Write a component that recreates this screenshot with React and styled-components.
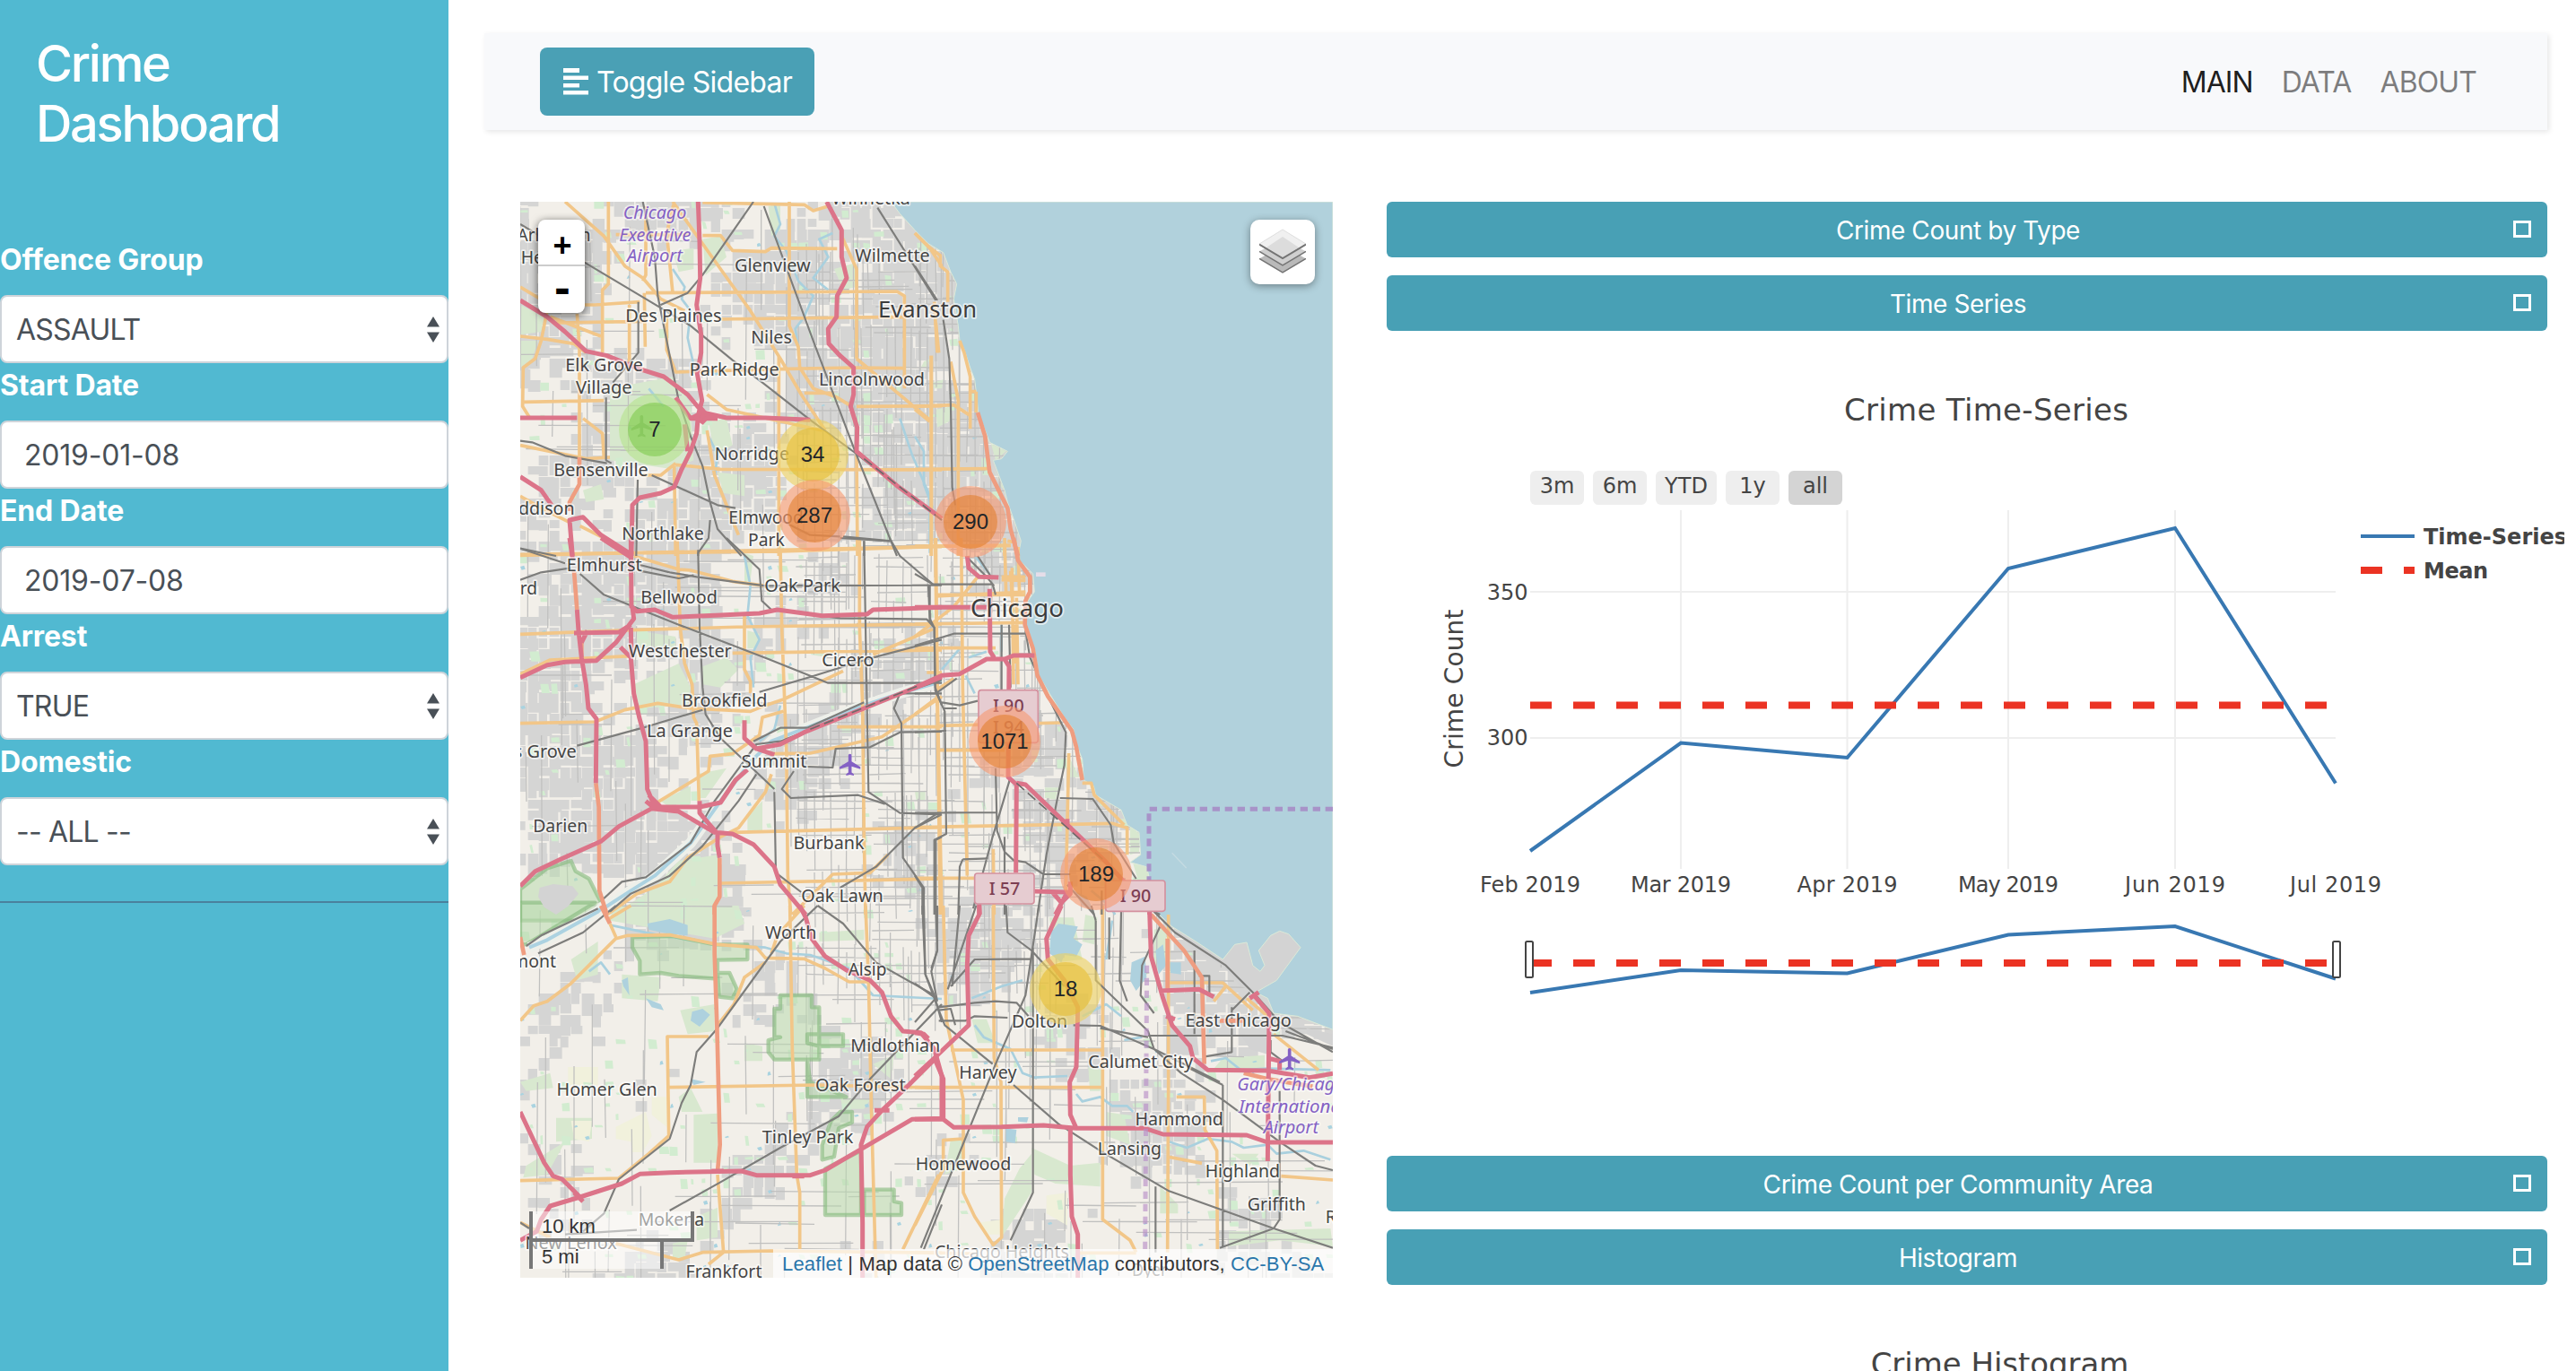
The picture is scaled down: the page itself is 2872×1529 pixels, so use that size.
import React from "react";
import styled, { createGlobalStyle } from "styled-components";

const UI_FONT = 'Inter, "Liberation Sans", sans-serif';
const MAP_UI_FONT = '"Liberation Sans", Arial, sans-serif';
const PLOT_FONT = '"DejaVu Sans", Verdana, sans-serif';

const GlobalStyle = createGlobalStyle`
  *, *::before, *::after { box-sizing: border-box; }
  body { margin: 0; background: #fff; font-family: ${UI_FONT}; color: #212529; overflow: hidden; }
`;

const Page = styled.div`
  display: flex;
  height: 1529px;
  overflow: hidden;
`;

/* ---------- Sidebar ---------- */

const Sidebar = styled.aside`
  flex: 0 0 500px;
  height: 100%;
  background: #51b9d1;
  color: #fff;
`;

const SidebarHeader = styled.header`
  height: 265px;
  padding: 38px 40px 0;
`;

const Title = styled.h3`
  margin: 0;
  width: 300px;
  font-size: 56px;
  font-weight: 500;
  line-height: 67px;
  letter-spacing: -2.3px;
`;

const Field = styled.div`
  display: flex;
  flex-direction: column;
`;

const FieldLabel = styled.label`
  height: 48px;
  margin-bottom: 16px;
  font-size: 32px;
  font-weight: 700;
  line-height: 49px;
  letter-spacing: -0.15px;
`;

const Control = styled.div`
  display: flex;
  align-items: center;
  justify-content: space-between;
  height: 76px;
  padding: 0 8px 0 ${(p) => (p.$inset ? "25px" : "16px")};
  border: 2px solid #ced4da;
  border-radius: 8px;
  background: #fff;
  color: #495057;
  font-size: 32px;
  letter-spacing: ${(p) => (p.$inset ? "-0.2px" : "-0.8px")};
`;

const Divider = styled.hr`
  margin: 40px 0 0;
  border: 0;
  border-top: 2px solid #4a819d;
`;

const SelectArrows = () => (
  <svg width="14" height="29" viewBox="0 0 14 29">
    <path d="M7 0L14 11.5H0ZM0 17.5H14L7 29Z" fill="#495057" />
  </svg>
);

/* ---------- Main area ---------- */

const Content = styled.main`
  flex: 1;
  padding: 37px 32px 0 40px;
`;

const Navbar = styled.nav`
  display: flex;
  align-items: center;
  justify-content: space-between;
  height: 108px;
  margin-bottom: 80px;
  padding: 0 79px 0 62px;
  background: #f8f9fb;
  box-shadow: 2px 2px 6px rgba(0, 0, 0, 0.1);
`;

const ToggleButton = styled.button`
  display: flex;
  align-items: center;
  gap: 9px;
  width: 306px;
  height: 76px;
  padding: 0 0 0 26px;
  border: 0;
  border-radius: 8px;
  background: #4aa0b5;
  color: #fff;
  font: 400 32px ${UI_FONT};
  letter-spacing: -0.75px;
  white-space: nowrap;
`;

const NavLinks = styled.div`
  display: flex;
  gap: 32px;
`;

const NavLink = styled.a`
  color: ${(p) => (p.$active ? "rgba(0,0,0,0.9)" : "rgba(0,0,0,0.5)")};
  padding-top: 2px;
  font-size: 32px;
  line-height: 48px;
  letter-spacing: -0.9px;
`;

const Columns = styled.div`
  display: flex;
  gap: 60px;
  padding-left: 40px;
`;

const Panels = styled.section`
  display: flex;
  flex-direction: column;
  width: 1294px;
`;

const PanelBar = styled.div`
  display: grid;
  grid-template-columns: 40px 1fr 40px;
  align-items: center;
  height: 62px;
  margin-bottom: ${(p) => (p.$open ? "0" : "20px")};
  border-radius: 6px;
  background: #48a0b5;
  color: #fff;
`;

const PanelName = styled.span`
  grid-column: 2;
  text-align: center;
  padding: 2px 20px 0 0;
  font-size: 28px;
  line-height: 40px;
  letter-spacing: -0.42px;
`;

const PanelToggle = styled.i`
  width: 20px;
  height: 19px;
  margin: 0 0 1px 2px;
  border: 3px solid #fff;
`;

const HistogramTitle = styled.h4`
  margin: 66px 0 0 73px;
  color: #444;
  text-align: center;
  font: 400 34px/44px ${PLOT_FONT};
  letter-spacing: -0.05px;
`;

/* ---------- Map ---------- */

const MapFrame = styled.section`
  position: relative;
  flex: 0 0 906px;
  height: 1200px;
  overflow: hidden;
  background: #f2efe9;
  font-family: ${MAP_UI_FONT};
`;

const MapSvg = styled.svg`
  display: block;
`;

const CLUSTER = {
  small: ["rgba(181,226,140,.6)", "rgba(120,200,70,.55)"],
  medium: ["rgba(236,209,95,.6)", "rgba(230,190,50,.6)"],
  large: ["rgba(246,152,112,.6)", "rgba(226,128,48,.6)"],
};

const Cluster = styled.div`
  position: absolute;
  left: ${(p) => p.$x - 40}px;
  top: ${(p) => p.$y - 40}px;
  width: 80px;
  height: 80px;
  padding: 10px;
  border-radius: 50%;
  background: ${(p) => CLUSTER[p.$size][0]};
`;

const ClusterCount = styled.div`
  height: 60px;
  border-radius: 50%;
  background: ${(p) => CLUSTER[p.$size][1]};
  color: #212529;
  text-align: center;
  font-size: 24px;
  line-height: 60px;
`;

const ZoomControl = styled.div`
  position: absolute;
  left: 20px;
  top: 20px;
  width: 52px;
  border-radius: 8px;
  background: #fff;
  box-shadow: 0 2px 10px rgba(0, 0, 0, 0.65);
  color: #000;
`;

const ZoomButton = styled.div`
  height: 52px;
  padding-left: 2px;
  text-align: center;
  font: 700 ${(p) => (p.$minus ? "44px/52px" : "36px/57px")} ${(p) => (p.$minus ? PLOT_FONT : MAP_UI_FONT)};
  border-bottom: ${(p) => (p.$minus ? "0" : "2px solid #ccc")};
`;

const LayersControl = styled.div`
  position: absolute;
  right: 20px;
  top: 20px;
  display: grid;
  place-items: center;
  width: 72px;
  height: 72px;
  border-radius: 10px;
  background: #fff;
  box-shadow: 0 2px 10px rgba(0, 0, 0, 0.4);
`;

const ScaleControl = styled.div`
  position: absolute;
  left: 10px;
  bottom: 10px;
`;

const ScaleLine = styled.div`
  width: ${(p) => p.$w}px;
  height: ${(p) => (p.$top ? 34 : 30)}px;
  padding-left: 10px;
  border: 4px solid #777;
  border-top: 0;
  ${(p) => (p.$top ? "" : "border-bottom: 0;")}
  background: rgba(255, 255, 255, 0.5);
  color: #333;
  font-size: 22px;
  line-height: ${(p) => (p.$top ? 34 : 33)}px;
`;

const Attribution = styled.div`
  position: absolute;
  right: 0;
  bottom: 0;
  width: 624px;
  height: 32px;
  padding-left: 10px;
  background: rgba(255, 255, 255, 0.7);
  color: #333;
  font-size: 22px;
  line-height: 33px;
  letter-spacing: 0.15px;
  white-space: nowrap;
  a { color: #2a76ab; }
`;

/* Six map tiles; every path inside a tile is local to that tile. */
const TILES = [
  {
    x: 0, y: 0,
    motorway: "M625,15L630,150L632,270L620,360L635,460L635,520L622,590L638,680L625,730L620,790L600,850L570,910L545,970L500,990L430,1005L405,1030L402,1200M30,345L120,400L180,450L250,515L320,530L430,575L510,600L590,660L640,720L720,738L850,738L1000,745M30,738L220,738M1055,15L1105,110L1105,200L1122,270L1090,330L1088,400L1060,440L1062,490L1100,530L1145,570L1145,660L1135,700L1157,770L1155,850L1290,965L1440,1075M30,935L100,980L135,1030M205,1200L195,1080L240,1070L300,1130L402,1195M550,670L600,740L640,720M600,740L690,740M590,850L580,760",
    trunk: "M228,870L228,960L195,1020L195,1050",
    road: "M180,15L310,130L380,230L440,270L500,340L580,380M325,15L325,290L305,310L305,520M30,300L130,360L280,360L430,350M120,380L100,480L80,540L40,570L38,700L60,735M40,685L310,680M220,390L228,500L228,870M30,465L120,475L210,490L250,520M150,420L440,415M130,400L300,465M395,360L395,570M445,320L448,500M450,320L1290,315L1315,330L1315,640M690,408L1310,400M540,15L700,240L800,380L900,540L970,660L1050,780M640,128L700,128L740,178L850,182L870,170L1090,172M930,15L930,430L960,500L965,570L1010,640L1090,670L1140,700M350,125L590,125M1060,30L1010,45L980,25L640,18M1105,130L1155,240L1155,540M450,30L450,260L440,280M520,400L520,510L550,585L890,575L1145,570L1310,572M895,530L895,1200M550,895L700,910L1440,912M30,830L250,875L330,870M240,740L305,790L310,870M545,900L550,1200M1155,850L1158,1200M655,660L720,710L1040,780M655,780L680,930L760,1130M440,1190L900,1185L1440,1168M1155,700L1440,698M1155,540L1400,745M1405,530L1405,1200M1420,420L1430,520M1350,120L1400,170L1440,230M980,655L1080,655M230,1100L310,1140L390,1190M30,1195L400,1190M30,1000L100,1040L200,1090M440,930L500,930L550,890M545,15L520,120L540,320",
    rail: "M30,90L240,215L450,340L600,430L740,545L840,620L1000,745L1150,855L1440,1080M810,15L640,260L590,320L500,360M845,30L900,180L1010,480L1150,850L1290,1200M1225,35L1420,345M440,15L480,200L490,330L510,430L560,680L600,800L640,900L665,1020L690,1110L770,1200M425,350L425,520L340,620M317,670L317,880L335,890M30,815L70,820L180,865L320,890M423,945L418,1200M470,930L690,1030L750,1040M665,1080L660,1140L625,1190L625,1200M1110,1135L1270,1150M1180,1150L1180,1200M900,1080L1000,1130L1100,1135M30,1175L150,1200",
    park: "M30,360L110,400L100,450L30,460ZM30,480L90,480L70,540L30,570ZM640,140L700,130L720,200L650,260ZM660,750L720,740L740,830L680,860ZM690,920L780,930L780,1000L710,990ZM330,640L540,600L600,690L610,880L540,910L330,880ZM540,180L610,170L610,240L560,250ZM240,980L300,960L310,1010L250,1020ZM860,30L900,20L900,110L870,130ZM1080,240L1150,220L1155,300L1110,310Z",
    stream: "M880,20L900,90L880,130L920,180L960,280L1010,330L980,400L950,440L960,500M1075,120L1030,140L1060,200L1010,270L1060,310M540,240L580,300L570,340L600,380L590,470L610,560M460,640L510,700M660,800L690,860L680,940M1300,740L1340,860L1400,1000L1400,1190",
  },
  {
    x: 1350, y: 0,
    trunk: "M210,720L235,800L250,920L290,1000L310,1040L320,1110L345,1200",
    road: "M0,120L45,165L85,195L85,230L110,250L110,350M65,350L75,520M55,530L55,1200M150,480L165,520L185,600L185,775M0,700L130,695L185,730M205,650L205,720M120,550L145,680L145,1200M185,650L205,650M0,910L245,908M0,1168L320,1165M0,710L50,750M300,1160L300,1200",
    rail: "M0,230L75,345M95,410L115,540L120,700L125,970L135,1030",
    park: "M70,710L120,700L115,750L75,770ZM255,825L305,850L270,880ZM30,550L50,540L40,570L20,570ZM60,620L95,610L90,640L65,640ZM260,900L300,980L290,970Z",
    stream: "M0,800L30,850L30,960L60,1040",
  },
  {
    x: 0, y: 1140,
    motorway: "M195,0L205,70M300,0L400,65M400,0L402,230L420,245L480,240L540,265L700,258L830,252L890,240L1040,260L1190,255L1210,240L1440,232M405,230L410,270L350,350L285,410L180,415L120,425L30,467M220,240L225,310L235,400L250,490L258,570L285,605L283,820M210,318L360,315L400,290M235,350L255,310M365,365L400,400L410,520L428,600L450,680L455,840L480,900L630,900L700,885L750,810L790,775M400,300L402,400M780,610L780,670L820,705L900,690L980,650L1180,570L1440,465M820,705L880,725M30,1165L80,1115L165,1075L300,1015L360,965L470,905L560,915L680,985L740,990L810,1025L880,1100L900,1160L985,1260M630,880L630,920L690,990L690,1030L697,1070M460,860L500,900M450,880L480,905",
    trunk: "M210,110L220,240M235,340L235,400M283,820L293,900L295,1180L320,1260M697,1070L697,1200L680,1230L680,1260",
    road: "M30,58L400,50L900,40L1440,28M555,0L565,300L580,420L605,490L610,600L620,620L628,880M410,60L560,105L600,108L740,145L850,160M900,40L905,300L920,700L925,1130L935,1260M30,322L400,308L780,297L1440,288M30,455L130,408L400,395M740,385L1440,375M780,260L780,440L800,480L800,520M1165,0L1165,300L1175,560L1180,1000L1185,1260M30,620L280,615L380,575L490,553L600,570L800,580L850,560L910,540L1110,445M1210,390L1410,305M1420,0L1425,540L1435,1260M480,890L660,780L665,730L740,722L830,660L840,600L910,580M870,722L1000,720L1240,665L1440,530M1090,632L1440,632M870,790L850,850L760,970L700,1000L590,1070L530,1150L420,1190L320,1260M740,985L1440,968M700,1155L1440,1140M940,1260L1020,1180L1075,1125L1200,1120L1260,1060M1390,450L1440,450",
    rail: "M30,35L180,85M30,140L100,115L200,100M230,120L310,190L560,290L860,405L1060,485L1440,485M430,90L530,115L620,130L850,160L1440,158M430,110L560,135L610,125M625,40L630,300L640,500L650,590L700,670L880,840M720,0L830,105L838,210L870,240L1100,268L1390,272L1415,300L1418,500L1440,560M1180,10L1195,850L1300,920L1440,925M1265,0L1300,60L1410,155M1400,160L1400,280M1100,0L1265,10M220,695L440,635L640,575M1440,340L1210,400L1000,465L830,515M1440,475L1300,520L1080,610L900,680L820,690L680,880L600,1020L450,1135L370,1150L300,1215M810,680L900,635L990,635L1180,550M820,790L760,880L640,1030L530,1130L400,1190L330,1250M1300,520L1280,570L1305,620L1310,1070L1380,1170L1380,1260M990,765L1075,768L1085,705L1200,700L1300,650L1440,648M945,780L905,840L935,870L1160,860L1250,890M880,850L885,1120L970,1185M1440,925L1350,970L1220,1100L1100,1170M1440,1000L1420,1010L1420,1260M1300,520L1440,520",
    park: "M410,490L560,420L600,500L590,560L430,570ZM640,430L720,400L760,440L700,500L640,490ZM560,1080L690,1060L690,1260L340,1260L480,1170ZM620,790L720,770L650,870L630,870ZM790,930L840,880L840,980L790,990ZM420,310L550,330L550,370L420,360ZM780,50L810,60L800,140L780,150ZM790,310L830,320L820,370L790,370ZM500,880L600,830L600,890L520,895ZM1000,390L1060,380L1060,400Z",
    forest: "M30,1175L120,1105L200,1080L215,1115L260,1140L290,1200L310,1235L240,1280L30,1280Z",
    canal: "M300,1245L400,1180L480,1130L600,1020L700,880L800,750L870,680L1000,630L1180,560L1300,520L1440,480",
    stream: "M780,60L800,160L790,260L830,340L800,400L810,500M900,560L880,640L830,680",
  },
  {
    x: 1350, y: 1140,
    motorway: "M0,500L90,460L150,455L240,405L300,405L315,430L312,800L340,825L338,1120M0,232L240,232M250,170L252,380L265,400M175,60L180,100L215,130L280,132M300,405L330,393L400,393M340,820L370,825L640,1085L700,1150M400,1182L510,1185L470,1260M215,1225L217,1260M785,1245L785,1260M510,940L510,965M460,1185L490,1220L520,1190L520,1150",
    trunk: "M330,0L345,75L385,130L385,180L370,210L368,290L395,370L410,460L445,530L525,645L540,700L560,810",
    road: "M0,28L320,25M68,0L75,500L90,1260M155,0L160,500L175,1130M70,190L370,190M70,195L370,180M290,130L370,130M290,140L370,142M0,288L370,283M0,368L270,368M325,100L330,490M340,200L345,490M335,290L340,420M300,0L305,190M345,30L350,190M320,110L325,200M0,330L130,230L210,130M80,628L490,618M80,710L300,710M0,968L520,958L660,955L710,970L710,1060M0,1138L240,1138M515,720L505,1180M560,820L590,820L600,860L700,960M262,1040L265,1260M0,590L80,530M70,510L130,470M310,10L340,15M625,1240L625,1260",
    rail: "M0,120L60,155L260,155L270,190M45,160L50,270L65,300L68,510L100,580L105,990L65,1010L65,1260M0,360L130,320L370,320M0,520L70,520L140,470M90,550L150,560L210,545M95,570L140,570M0,650L105,645M290,290L290,510M315,290L320,500M370,310L385,400L440,520L505,650L500,760L475,880L440,1060L410,1260M485,870L595,873L655,960L665,1020L740,1140M270,770L275,980L300,1050L330,1078L370,1085L430,1125L520,1125M510,1160L600,1260M320,800L260,1000L195,1240M0,920L275,918M160,1075L150,1100L145,1260M160,1075L245,1072M300,1000L300,1260M0,1130L25,1170L25,1260M180,70L240,130L265,160M210,60L255,130M625,1180L625,1260M800,1250L820,1260M0,970L70,925M370,825L510,965",
    park: "M520,740L550,800L520,800ZM670,940L700,940L750,990L750,1050L720,1060L720,970ZM730,1090L780,1100L780,1150L745,1140ZM405,310L420,310L415,360L405,360ZM435,835L480,835L470,875L435,870ZM390,710L415,710L410,750L390,750ZM0,850L35,845L35,875L5,880Z",
    stream: "M150,370L90,440M170,460L200,520M200,60L250,120M240,380L180,400M290,290L290,380M590,1180L650,1230L670,1260",
    lake: "M530,1180L575,1200L600,1250L560,1230Z",
  },
  {
    x: 0, y: 2370,
    motorway: "M965,0L985,40L1005,110L1050,170L1120,215L1200,250L1240,290L1270,370L1310,420L1370,425L1415,480L1440,570L1440,710M1415,515L1330,600L1240,685L1190,740L1170,800L1175,1060L1175,1245M30,690L110,860L140,905L170,915L230,975M230,975L130,1005L100,1050L85,1090L30,1120M230,975L370,930L430,898L530,893L770,888L820,902L1000,902L1050,885L1170,815L1340,715L1440,712M210,960L240,990M670,888L710,888M940,905L980,905M1215,685L1265,685",
    trunk: "M300,0L330,60M680,0L680,160L688,400L698,800L690,890M30,105L43,165",
    road: "M30,385L75,335L120,320L200,260L350,110L390,100L530,98L690,130L820,140L850,175L980,178L1050,210L1130,255L1200,255M330,60L350,105M1185,0L1195,250L1205,700L1220,1245M932,0L940,480L955,900L965,960L965,1150M850,190L780,240L745,330L690,400M870,160L890,100L980,0M660,438L522,438L527,770L460,830L360,912L30,920M522,608L1020,600L1440,610M690,900L710,1160L660,1200M350,1130L560,1185L640,1160L870,1155L1440,1162M1430,900L1310,1150M325,45L400,0M30,1060L130,1110",
    rail: "M50,135L100,100L290,10M90,160L240,90L350,0M1025,0L900,120L690,410L620,490L600,600L570,660L530,780L360,915L310,1030L240,1090M1025,0L1110,60L1220,190L1415,300L1440,390M1440,330L1200,580L1095,705L900,810L700,925L530,1020M1380,0L1385,230L1415,300M1420,0L1425,150L1405,210M1440,1000L1380,1150M30,1060L60,1080M180,1100L420,1085",
    park: "M340,0L760,0L780,60L680,110L330,50ZM200,180L290,120L290,230L220,250ZM370,230L500,240L490,320L370,310ZM565,350L680,330L680,420L590,430ZM610,700L690,695L690,860L610,860ZM50,870L180,790L120,900L40,910ZM150,710L270,710L270,780L150,790ZM780,460L840,470L840,520L780,520ZM1210,530L1280,500L1270,580ZM30,590L130,560L140,610L50,620ZM560,640L600,610L640,690L570,690ZM620,1040L690,1010L690,1110L620,1120ZM1030,90L1180,80L1180,115L1030,120ZM540,1130L590,1120L580,1180L540,1180ZM1100,640L1200,650L1180,680L1110,680Z",
    field: "M190,540L290,540L290,600L190,600ZM470,640L525,640L520,740L470,700ZM350,740L450,690L470,770L440,825L405,825L400,790L350,780ZM200,720L270,720L260,790L210,780Z",
    forest: "M30,-10L280,-10L100,100L50,130L30,130ZM405,105L540,102L680,130L790,130L790,180L690,182L690,245L560,235L500,225L430,230L430,185L405,140ZM690,225L730,225L755,280L740,310L695,305ZM900,300L1005,300L1005,340L1030,340L1030,515L880,515L860,490L860,450L900,440L880,440L880,345L900,345ZM990,430L1110,430L1110,470L1030,470L990,460ZM990,515L1000,590L1050,610L1120,640L990,640ZM1040,850L1040,800L1070,720L1100,690L1140,690L1140,725L1095,745L1080,840ZM1050,880L1170,820L1170,1035L1050,1035ZM1180,950L1280,950L1280,990L1305,995L1305,1035L1180,1035Z",
    lake: "M455,60L530,45L590,65L590,100L530,95L460,80ZM605,355L640,345L665,365L630,405L600,385ZM450,310L500,330L510,350L470,340ZM370,250L390,240L395,300L375,270ZM600,580L650,590L610,600Z",
    canal: "M60,140L120,115L290,20L310,0",
    stream: "M330,65L500,100L690,130L850,140L920,160L1000,165L1130,210L1210,300L1440,312M260,220L300,190L330,230",
  },
  {
    x: 1350, y: 2370,
    motorway: "M785,20L790,170L830,310L860,400L920,470L930,510L980,550L1180,552L1320,575L1398,562M820,285L950,280L1000,305M1130,295L1185,360L1180,855M490,0L440,110L445,180L500,250L545,340L540,540L518,590L520,700L540,745L770,745L830,765L1110,768L1180,792L1398,792M540,745L430,735L290,740L130,742L95,715L0,715M95,715L95,580L65,510L0,570M65,510L180,400L175,200L180,100L215,30L215,0M0,425L30,430L45,445M520,745L520,900L525,1040L545,1100L545,1245M840,370L870,380M1120,310L1150,290M1180,510L1220,520L1220,550",
    trunk: "M790,30L900,150L960,240L968,530M845,110L845,280M1100,560L1180,580L1330,605M1020,385L1100,385",
    road: "M95,0L105,380L130,500L162,650L162,960L200,1040L262,1135L290,1110L288,590L265,510L262,0M0,608L630,608M120,483L630,483M628,0L628,1050L720,1120L740,1160M848,30L848,600L845,1160M850,258L1030,258L1130,350M875,640L968,640L970,750L1010,820L1012,1150M845,840L960,862M1225,905L1398,918M1200,430L1350,550M1110,310L1180,370M160,780L95,785L95,880L0,1070M1000,320L1040,270M540,1162L740,1162M0,1160L200,1165",
    rail: "M25,0L35,230L80,350L100,400L260,530M75,0L75,150L55,220L75,320M150,0L125,270M205,0L110,280M415,0L370,300L270,530L20,1145M395,140L395,960L320,1120M305,0L310,90L390,150L500,270M330,600L480,730L620,820L850,955L1200,1080L1398,1145M605,50L605,250L780,420L800,480L890,560L1030,650L1220,790L1340,870L1398,885M800,20L870,90L1040,200L1140,300L1220,390L1398,490M780,435L1230,435L1398,475M1240,420L1398,480M530,400L620,402L800,480L1020,590M620,410L780,440M1030,600L1030,1140M1220,620L1220,1050L1200,1080L1020,1145M1060,340L1060,490L970,505M1120,290L1060,350M80,340L200,325L270,320L340,325L380,370M0,260L70,310L0,390M80,385L170,385L200,370L310,375M80,350L120,345L135,400M805,940L805,1160M690,20L685,250L710,320M985,300L985,235L950,235M935,150L935,430M820,70L760,200L755,300L800,360M120,270L200,180L390,178M1190,450L1190,490L1230,520M910,540L1030,600M650,40L650,180M590,0L605,50",
    park: "M390,810L520,870L620,860L620,940L470,930L400,900ZM350,880L390,830L390,960L330,1050L290,1110L300,980ZM800,80L840,70L840,200L800,220ZM640,690L700,700L720,800L640,770ZM570,30L610,40L600,130L560,120ZM820,940L880,1000L880,1030L820,1030ZM1050,1090L1390,1080L1398,1140L1220,1120L1050,1140ZM190,380L240,380L270,460L210,460ZM1030,510L1170,500L1170,545L1000,545ZM450,40L530,40L560,180L470,190ZM120,780L160,780L160,880L100,900ZM580,540L630,550L620,620L585,620ZM1060,830L1150,830L1120,870Z",
    field: "M440,970L510,960L510,1070L440,1030ZM220,1060L290,1050L290,1100L230,1100Z",
    lake: "M455,90L480,60L545,70L530,110L560,130L540,170L500,165L490,190L450,160ZM725,190L770,170L775,240L740,285L720,250ZM805,150L830,130L840,200L815,230ZM305,745L340,750L335,795L305,790ZM850,190L890,190L890,230L855,225ZM345,708L380,708L375,725L345,722Z",
    stream: "M200,400L230,440L320,480L360,560L400,575L510,570M190,310L240,290L290,270L360,250M540,630L560,655L620,640L660,670L710,670L730,690M560,370L640,330L690,370M660,50L640,180M850,790L910,810L980,780L1060,790L1100,810L1180,800L1210,830L1300,820L1390,850M990,520L1040,510L1090,550L1180,545L1390,550M700,450L760,440",
  },
];

const WATER =
  "M1270,15L1300,55L1350,110L1395,155L1445,185L1470,250L1490,290L1480,340L1495,430L1500,480L1515,510L1535,570L1550,610L1555,650L1562,720L1585,780L1600,820L1660,850L1640,875L1612,880L1650,980L1660,1020L1685,1090L1705,1150L1695,1200L1700,1215L1745,1260L1750,1320L1725,1355L1720,1430L1750,1510L1765,1600L1800,1660L1850,1740L1880,1780L1890,1830L1910,1880L1915,1950L1948,1970L1955,2000L2040,2050L2060,2100L2100,2125L2105,2200L2070,2225L2125,2240L2135,2280L2145,2380L2210,2440L2290,2490L2380,2550L2420,2500L2460,2493L2475,2550L2480,2570L2505,2590L2520,2570L2500,2520L2540,2470L2570,2455L2600,2465L2640,2510L2560,2620L2490,2660L2530,2680L2550,2730L2630,2740L2748,2785L2748,15Z";
const INDUSTRIAL =
  "M2230,2450L2290,2490L2380,2550L2420,2500L2460,2493L2475,2550L2480,2570L2505,2590L2520,2570L2500,2520L2540,2470L2570,2455L2600,2465L2640,2510L2560,2620L2490,2660L2440,2640L2380,2570L2280,2520ZM2660,2780L2748,2800L2748,2840L2660,2800ZM2190,2780L2290,2770L2300,2870L2190,2870ZM2440,2800L2530,2810L2540,2870L2470,2850Z";

/* Repeatable pseudo-random source for the urban texture. */
const makeRandom = (seed) => {
  let s = seed;
  return () => {
    s = (s * 1664525 + 1013904223) % 4294967296;
    return s / 4294967296;
  };
};

const buildTexture = () => {
  const rnd = makeRandom(71);
  const phase = Array.from({ length: 8 }, () => rnd() * 6.28);
  const noise = (x, y) =>
    Math.sin(x / 170 + phase[0]) * Math.cos(y / 210 + phase[1]) +
    0.7 * Math.sin((x + y) / 95 + phase[2]) +
    0.6 * Math.cos((x - y) / 120 + phase[3]);
  let blocks = "";
  let greens = "";
  let ponds = "";
  let streets = "";
  const c = 36;
  for (let y = 0; y < 3640; y += c) {
    for (let x = 20; x < 2760; x += c) {
      const city = x > 900 && y > 1150 && y < 2400;
      const north = y < 1150;
      const west = x < 700 && y < 2250;
      const south = y > 2500;
      let bias = 0;
      if (city) bias = -0.35;
      if (north) bias = x > 1150 ? 1.6 : 0.5;
      if (west && !north) bias = 1.4;
      if (south) bias = -0.45;
      if (x > 1650 && y > 1700 && y < 2150) bias = 0.8;
      if (x > 2150 && y > 2400 && y < 2800) bias = 1.6;
      if (noise(x, y) + bias + (rnd() - 0.5) * 1.6 > 0.35) {
        const w = c * (0.75 + rnd() * 0.5);
        const h = c * (0.75 + rnd() * 0.5);
        blocks += `M${x},${y}h${w.toFixed(0)}v${h.toFixed(0)}h-${w.toFixed(0)}z`;
      }
      const g = rnd();
      if (g < 0.085) {
        const w = 8 + rnd() * 26;
        const h = 8 + rnd() * 26;
        greens += `M${x + 5},${y + 8}l${w.toFixed(0)},${(rnd() * 6 - 3).toFixed(0)}l${(rnd() * 6).toFixed(0)},${h.toFixed(0)}h-${w.toFixed(0)}z`;
      } else if (g > 0.98) {
        ponds += `M${x + 10},${y + 12}l${(4 + rnd() * 10).toFixed(0)},-4l4,${(4 + rnd() * 9).toFixed(0)}l-12,3z`;
      }
    }
  }
  const addRun = (x, y, vertical, len) => {
    const wob = (rnd() * 8 - 4).toFixed(0);
    streets += vertical ? `M${x.toFixed(0)},${y.toFixed(0)}l${wob},${len.toFixed(0)}` : `M${x.toFixed(0)},${y.toFixed(0)}l${len.toFixed(0)},${wob}`;
  };
  for (let i = 0; i < 400; i++) addRun(20 + rnd() * 2700, rnd() * 3600, rnd() < 0.5, 120 + rnd() * 420);
  for (let x = 960; x < 2060; x += 27) {
    for (let y = 150; y < 2700; y += 260) if (rnd() < 0.62) addRun(x, y + rnd() * 40, true, 120 + rnd() * 240);
  }
  for (let y = 250; y < 2650; y += 29) {
    for (let x = 950; x < 2050; x += 240) if (rnd() < 0.6) addRun(x + rnd() * 40, y, false, 100 + rnd() * 230);
  }
  return { blocks, greens, ponds, streets };
};

const TEXTURE = buildTexture();

/* [text, tile, centre x, baseline y, width] */
const LABELS = [
  ["Winnetka", 0, 1203, 25, 262], ["Arlington", 0, 143, 148, 245], ["Heights", 0, 138, 223, 212],
  ["Glenview", 0, 874, 250, 254], ["Wilmette", 0, 1275, 215, 250], ["Des Plaines", 0, 543, 417, 322],
  ["Niles", 0, 870, 490, 137], ["Elk Grove", 0, 311, 583, 260], ["Village", 0, 310, 657, 188],
  ["Park Ridge", 0, 746, 597, 300], ["Lincolnwood", 0, 1206, 630, 354], ["Norridge", 0, 805, 879, 250],
  ["Bensenville", 0, 300, 932, 316], ["Addison", 0, 99, 1063, 226], ["Elmwood", 0, 852, 1092, 250],
  ["Park", 0, 853, 1166, 122], ["Northlake", 0, 507, 1147, 275],
  ["Elmhurst", 2, 311, 110, 252], ["Lombard", 2, -35, 190, 244], ["Oak Park", 2, 974, 180, 254],
  ["Bellwood", 2, 561, 218, 257], ["Westchester", 2, 565, 398, 345], ["Cicero", 2, 1126, 430, 175],
  ["Brookfield", 2, 713, 564, 286], ["La Grange", 2, 597, 665, 288], ["Downers Grove", 2, 3, 736, 430],
  ["Summit", 2, 879, 768, 218], ["Darien", 2, 164, 984, 183], ["Burbank", 2, 1062, 1042, 237],
  ["Oak Lawn", 2, 1107, 1218, 275],
  ["Worth", 4, 935, 110, 172], ["Lemont", 4, 45, 206, 210], ["Alsip", 4, 1191, 235, 128],
  ["Midlothian", 4, 1285, 489, 300], ["Homer Glen", 4, 320, 636, 337], ["Oak Forest", 4, 1168, 622, 302],
  ["Tinley Park", 4, 992, 794, 305], ["Mokena", 4, 535, 1070, 220], ["New Lenox", 4, 200, 1150, 307],
  ["Frankfort", 4, 711, 1245, 255],
  ["Homewood", 5, 162, 886, 320], ["Dolton", 5, 417, 408, 186], ["East Chicago", 5, 1082, 404, 355],
  ["Harvey", 5, 244, 579, 193], ["Calumet City", 5, 755, 542, 350], ["Hammond", 5, 884, 736, 295],
  ["Lansing", 5, 718, 835, 213], ["Highland", 5, 1096, 908, 250], ["Griffith", 5, 1210, 1020, 195],
  ["R", 5, 1391, 1062, 36], ["Chicago Heights", 5, 291, 1180, 450], ["Dyer", 5, 785, 1240, 118],
];
const CITY_LABELS = [["Evanston", 0, 1392, 403, 330, 75], ["Chicago", 3, 342, 264, 312, 84]];
const AIRPORT_LABELS = [
  ["Chicago", 0, 480, 73, 212], ["Executive", 0, 481, 148, 240], ["Airport", 0, 480, 216, 186],
  ["Gary/Chicago", 5, 1258, 618, 360], ["International", 5, 1262, 692, 358], ["Airport", 5, 1258, 762, 184],
];
const SHIELDS = [
  { x: 1563, y: 1649, h: 176, lines: ["I 90", "I 94"] },
  { x: 1550, y: 2262, h: 102, lines: ["I 57"] },
  { x: 1988, y: 2286, h: 103, lines: ["I 90"] },
];
const PLANE =
  "M21 16v-2l-8-5V3.500c0-.83-.67-1.500-1.500-1.500S10 2.670 10 3.500V9l-8 5v2l8-2.500V19l-2 1.500V22l3.500-1 3.500 1v-1.500L13 19v-5.500l8 2.500z";

const CLUSTERS = [
  { n: 7, x: 150, y: 254, size: "small" },
  { n: 34, x: 326, y: 282, size: "medium" },
  { n: 287, x: 328, y: 350, size: "large" },
  { n: 290, x: 502, y: 357, size: "large" },
  { n: 1071, x: 540, y: 602, size: "large" },
  { n: 189, x: 642, y: 750, size: "large" },
  { n: 18, x: 608, y: 878, size: "medium" },
];

const MapLayer = ({ kind, ...style }) => (
  <g strokeLinejoin="round" {...style}>
    {TILES.map((t, i) => (t[kind] ? <path key={i} d={t[kind]} transform={`translate(${t.x} ${t.y})`} /> : null))}
  </g>
);

const PlaceLabels = ({ items, size, color, italic }) => (
  <g
    fontFamily='"Noto Sans", sans-serif'
    fontStyle={italic ? "italic" : "normal"}
    fill={color}
    stroke="#fff"
    strokeOpacity={italic ? 0.5 : 0.65}
    strokeWidth="11"
    strokeLinejoin="round"
    paintOrder="stroke"
    textAnchor="middle"
  >
    {items.map(([text, tile, x, y, w, s]) => (
      <text key={text + y} x={TILES[tile].x + x} y={TILES[tile].y + y} fontSize={s || size} textLength={w} lengthAdjust="spacingAndGlyphs">
        {text}
      </text>
    ))}
  </g>
);

const BaseMap = () => (
  <MapSvg width="906" height="1200" viewBox="30 15 2718 3600">
    <rect x="0" y="0" width="2760" height="3640" fill="#f2efe9" />
    <path d={TEXTURE.blocks} fill="#d5d5d4" />
    <MapLayer kind="park" fill="#d8e8cf" />
    <MapLayer kind="field" fill="#f1f1dc" />
    <path d={TEXTURE.greens} fill="#d2ecd0" />
    <path d={TEXTURE.ponds} fill="#a9d3e0" />
    <path d={TEXTURE.streets} fill="none" stroke="#c0c0bf" strokeWidth="3.800" />
    <MapLayer kind="stream" fill="none" stroke="#a9d0de" strokeWidth="8" />
    <MapLayer kind="lake" fill="#aed1de" />
    <path d={INDUSTRIAL} fill="#d3d3d3" />
    <path d={WATER} fill="#b1d1dc" stroke="#dcead8" strokeWidth="3" />
    <path d="M1755,1255h32v14h-32z" fill="#e6dde8" />
    <path d="M2210,2194l48,50" stroke="#c5dbe2" strokeWidth="4" />
    <MapLayer kind="forest" fill="#b9dbae" fillOpacity=".55" stroke="#83b97c" strokeOpacity=".6" strokeWidth="13" />
    <path d="M95,2310L140,2298L205,2305L225,2330L190,2372L150,2400L110,2375L90,2340Z" fill="#d3d3d3" />
    <MapLayer kind="canal" fill="none" stroke="#eef0ea" strokeWidth="36" />
    <MapLayer kind="canal" fill="none" stroke="#acd2e1" strokeWidth="12" />
    <MapLayer kind="road" fill="none" stroke="#f2c688" strokeWidth="11" />
    <MapLayer kind="rail" fill="none" stroke="#7d7d7b" strokeWidth="6.500" />
    <MapLayer kind="trunk" fill="none" stroke="#ef9d80" strokeWidth="14" />
    <MapLayer kind="motorway" fill="none" stroke="#dc7489" strokeWidth="15" />
    <path d="M1180,875L1440,1080M1690,1960L1990,2225M1000,1780L1360,1635" fill="none" stroke="#6f6a6a" strokeWidth="5" strokeDasharray="34 16" />
    <path d="M640,712L658,733L640,752L618,738Z" fill="#dc7489" stroke="#dc7489" strokeWidth="14" />
    <path d="M2748,2047H2133V2290" fill="none" stroke="#a893c8" strokeWidth="15" strokeDasharray="25 17" />
    <path d="M2126,2570L2120,3520" fill="none" stroke="#b98fc8" strokeOpacity=".65" strokeWidth="15" strokeDasharray="25 17" />
    <PlaceLabels items={LABELS} size={61} color="#444" />
    <PlaceLabels items={CITY_LABELS} color="#3c3c3c" />
    <PlaceLabels items={AIRPORT_LABELS} size={61} color="#8461c4" italic />
    {[[394, 722, "#7aa36a"], [1091, 1855, "#8461c4"], [2561, 2840, "#8461c4"]].map(([x, y, fill]) => (
      <path key={x} d={PLANE} fill={fill} transform={`translate(${x} ${y}) scale(3.650)`} />
    ))}
    {SHIELDS.map((s) => (
      <g key={s.x}>
        <rect x={s.x} y={s.y} width="199" height={s.h} rx="9" fill="#e6ccd1" stroke="#d4919f" strokeWidth="5" />
        {s.lines.map((line, i) => (
          <text key={line} x={s.x + 100} y={s.y + 73 + i * 71} textAnchor="middle" textLength="104" lengthAdjust="spacingAndGlyphs" fontFamily='"Noto Sans", sans-serif' fontWeight="500" fontSize="58" fill="#7d3f53">
            {line}
          </text>
        ))}
      </g>
    ))}
  </MapSvg>
);

const LayersIcon = () => (
  <svg width="52" height="52" viewBox="0 0 52 52">
    <path d="M0 33.500L26 19L52 33.500L26 49Z" fill="#b9b9b9" />
    <path d="M0 33.500L26 49L52 33.500" fill="none" stroke="#747474" strokeWidth="1.500" />
    <path d="M0 25.500L26 11L52 25.500L26 41Z" fill="#cfcfcf" />
    <path d="M0 25.500L26 41L52 25.500" fill="none" stroke="#747474" strokeWidth="1.500" />
    <path d="M0 17L26 1L52 17L26 33Z" fill="#f0f0f0" stroke="#ccc" strokeWidth=".6" />
    <path d="M8 21L26 9L44 21L26 32Z" fill="#dcdcdc" />
    <path d="M0 17.500L26 33L52 17.500" fill="none" stroke="#747474" strokeWidth="2" />
  </svg>
);

const CrimeMap = () => (
  <MapFrame>
    <BaseMap />
    {CLUSTERS.map((c) => (
      <Cluster key={c.n} $x={c.x} $y={c.y} $size={c.size}>
        <ClusterCount $size={c.size}>{c.n}</ClusterCount>
      </Cluster>
    ))}
    <ZoomControl>
      <ZoomButton>+</ZoomButton>
      <ZoomButton $minus>-</ZoomButton>
    </ZoomControl>
    <LayersControl>
      <LayersIcon />
    </LayersControl>
    <ScaleControl>
      <ScaleLine $top $w={184}>10 km</ScaleLine>
      <ScaleLine $w={150}>5 mi</ScaleLine>
    </ScaleControl>
    <Attribution>
      <a>Leaflet</a> | Map data © <a>OpenStreetMap</a> contributors, <a>CC-BY-SA</a>
    </Attribution>
  </MapFrame>
);

/* ---------- Time series plot ---------- */

const PlotSvg = styled.svg`
  display: block;
  flex: none;
  margin-right: -19px;
  font-family: ${PLOT_FONT};
  fill: #444;
`;

const MONTHS = [
  ["Feb 2019", 1706, 949, 1107],
  ["Mar 2019", 1874, 828.6, 1082],
  ["Apr 2019", 2059.5, 845, 1085.5],
  ["May 2019", 2239, 634, 1042.5],
  ["Jun 2019", 2425, 589, 1033],
  ["Jul 2019", 2604, 873.5, 1091.5],
];
const RANGES = [["3m", 1706, 60], ["6m", 1776, 60], ["YTD", 1846, 68], ["1y", 1924, 60], ["all", 1994, 60]];

const linePoints = (col) => MONTHS.map((m) => `${m[1]},${m[col]}`).join(" ");

const TimeSeriesPlot = () => (
  <PlotSvg width="1313" height="920" viewBox="1546 369 1313 920">
    <text x="2214.500" y="469" fontSize="34" textAnchor="middle" textLength="317">Crime Time-Series</text>
    {RANGES.map(([label, x, w]) => (
      <g key={label}>
        <rect x={x} y="525" width={w} height="38" rx="6" fill={label === "all" ? "#d4d4d4" : "#eee"} />
        <text x={x + w / 2} y="550" fontSize="24" textAnchor="middle">{label}</text>
      </g>
    ))}
    <g stroke="#eee" strokeWidth="2">
      {MONTHS.slice(1, 5).map((m) => <line key={m[0]} x1={m[1]} x2={m[1]} y1="569" y2="969" />)}
      <line x1="1706" x2="2604" y1="660" y2="660" />
      <line x1="1706" x2="2604" y1="823" y2="823" />
    </g>
    <g fontSize="24" textAnchor="end">
      <text x="1703.500" y="668.500">350</text>
      <text x="1703.500" y="831">300</text>
    </g>
    <g fontSize="24" textAnchor="middle">
      {MONTHS.map((m) => <text key={m[0]} x={m[1]} y="995" textLength={m[0] === "Jul 2019" ? 102 : 112}>{m[0]}</text>)}
    </g>
    <text transform="translate(1630.500 768) rotate(-90)" fontSize="28" textAnchor="middle" textLength="177">Crime Count</text>
    <g fill="none">
      <polyline points={linePoints(2)} stroke="#3878b2" strokeWidth="4" />
      <line x1="1706" x2="2604" y1="786.500" y2="786.500" stroke="#eb3323" strokeWidth="8" strokeDasharray="24 24" />
      <polyline points={linePoints(3)} stroke="#3878b2" strokeWidth="4" />
      <line x1="1706" x2="2604" y1="1074" y2="1074" stroke="#eb3323" strokeWidth="8" strokeDasharray="24 24" />
      <line x1="2632" x2="2692" y1="598" y2="598" stroke="#3878b2" strokeWidth="4" />
      <line x1="2632" x2="2692" y1="636" y2="636" stroke="#eb3323" strokeWidth="8" strokeDasharray="24 24" />
    </g>
    {[1701, 2601].map((x) => (
      <rect key={x} x={x} y="1050" width="8" height="40" rx="1.500" fill="#fff" stroke="#444" strokeWidth="2" />
    ))}
    <g fontSize="24" fontWeight="700">
      <text x="2702" y="607" textLength="160">Time-Series</text>
      <text x="2702" y="645" textLength="72">Mean</text>
    </g>
  </PlotSvg>
);

const Panel = ({ name, open }) => (
  <PanelBar $open={open}>
    <PanelName>{name}</PanelName>
    <PanelToggle />
  </PanelBar>
);

const FILTERS = [
  { label: "Offence Group", value: "ASSAULT", select: true },
  { label: "Start Date", value: "2019-01-08" },
  { label: "End Date", value: "2019-07-08" },
  { label: "Arrest", value: "TRUE", select: true },
  { label: "Domestic", value: "-- ALL --", select: true },
];

export default function App() {
  return (
    <>
      <GlobalStyle />
      <Page>
        <Sidebar>
          <SidebarHeader>
            <Title>Crime Dashboard</Title>
          </SidebarHeader>
          {FILTERS.map((f) => (
            <Field key={f.label}>
              <FieldLabel>{f.label}</FieldLabel>
              <Control $inset={!f.select}>
                {f.value}
                {f.select && <SelectArrows />}
              </Control>
            </Field>
          ))}
          <Divider />
        </Sidebar>
        <Content>
          <Navbar>
            <ToggleButton>
              <svg width="28" height="30" viewBox="0 0 28 30">
                <path d="M0 0H18V5H0ZM0 8.500H28V13H0ZM0 17H18V21.500H0ZM0 25H28V29.500H0Z" fill="#fff" />
              </svg>
              Toggle Sidebar
            </ToggleButton>
            <NavLinks>
              <NavLink $active>MAIN</NavLink>
              <NavLink>DATA</NavLink>
              <NavLink>ABOUT</NavLink>
            </NavLinks>
          </Navbar>
          <Columns>
            <CrimeMap />
            <Panels>
              <Panel name="Crime Count by Type" />
              <Panel name="Time Series" open />
              <TimeSeriesPlot />
              <Panel name="Crime Count per Community Area" />
              <Panel name="Histogram" open />
              <HistogramTitle>Crime Histogram</HistogramTitle>
            </Panels>
          </Columns>
        </Content>
      </Page>
    </>
  );
}
